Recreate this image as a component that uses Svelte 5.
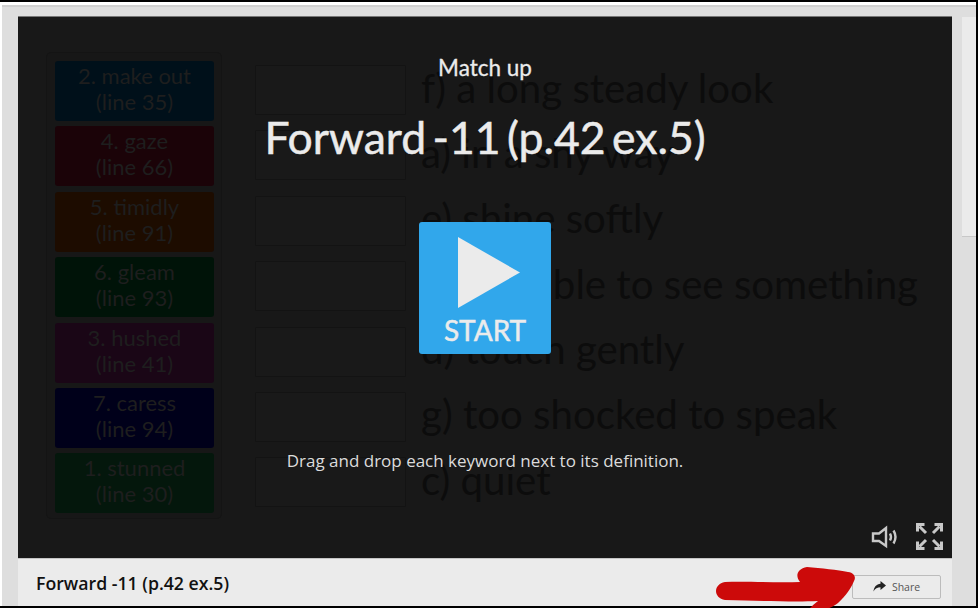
<script>
  const rows = [
    { word: '2. make out', line: '(line 35)', tone: 'blue', def: 'f) a long steady look' },
    { word: '4. gaze', line: '(line 66)', tone: 'red', def: 'a) in a shy way' },
    { word: '5. timidly', line: '(line 91)', tone: 'orange', def: 'e) shine softly' },
    { word: '6. gleam', line: '(line 93)', tone: 'green', def: 'b) not able to see something' },
    { word: '3. hushed', line: '(line 41)', tone: 'purple', def: 'd) touch gently' },
    { word: '7. caress', line: '(line 94)', tone: 'navy', def: 'g) too shocked to speak' },
    { word: '1. stunned', line: '(line 30)', tone: 'forest', def: 'c) quiet' }
  ];
</script>

<div class="frame">
  <div class="sheet">
    <main class="player">
      <section class="stage">
        <div class="game">
          <div class="tray">
            {#each rows as r}
              <div class="tile {r.tone}"><span>{r.word}</span><span>{r.line}</span></div>
            {/each}
          </div>
          <div class="answers">
            {#each rows as r}
              <div class="answer"><div class="slot"></div><div class="def">{r.def}</div></div>
            {/each}
          </div>
        </div>

        <div class="intro">
          <div class="type">Match up</div>
          <h1>Forward -11 (p.42 ex.5)</h1>
          <button class="start">
            <svg width="62" height="72" viewBox="0 0 62 72"><path d="M0 0L62 35.500L0 71Z" fill="#ebebeb" /></svg>
            <span>START</span>
          </button>
          <p>Drag and drop each keyword next to its definition.</p>
        </div>

        <div class="controls">
          <svg width="28" height="24" viewBox="0 0 28 24" fill="none" stroke="#c8c8c8" stroke-width="2.400">
            <path d="M2 8.500H8L15 3V21L8 16H2Z" />
            <path d="M19 8.500Q21 12 19 15.500M22.500 5.500Q26.500 12 22.500 18.500" />
          </svg>
          <svg width="27" height="27" viewBox="0 0 27 27" fill="none" stroke="#c8c8c8" stroke-width="3">
            <path d="M1.500 8.500V1.500H8.500M3.500 3.500L10 10" />
            <path d="M25.500 8.500V1.500H18.500M23.500 3.500L17 10" />
            <path d="M1.500 18.500V25.500H8.500M3.500 23.500L10 17" />
            <path d="M25.500 18.500V25.500H18.500M23.500 23.500L17 17" />
          </svg>
        </div>
      </section>

      <footer class="bar">
        <div class="name">Forward -11 (p.42 ex.5)</div>
        <button class="share">
          <svg width="13" height="11" viewBox="0 0 13 11"><path d="M7.500 0L13 4.500L7.500 9V6.300C4.500 6.300 2 7.300 0.500 10.500C0.800 6 3.500 3 7.500 2.700Z" fill="#222" /></svg>
          <span>Share</span>
        </button>
      </footer>
    </main>
    <aside class="rail"></aside>
  </div>

  <svg class="scribble" width="150" height="44" viewBox="0 0 150 44">
    <path d="M9 16C30 15 60 17 84 16C79 10 81 3 91 1C105 2 122 4 132 6C139 7 140 12 138 15C135 22 130 30 122 37C118 40 114 42 108 44H92C95 41 98 38 102 35C80 36 50 35 9 34C-3 32 -3 18 9 16Z" fill="#cc0a0a" />
  </svg>
</div>

<style>
  :global(body) {
    margin: 0;
    background: #000;
  }
  .frame {
    position: relative;
    width: 976px;
    height: 606px;
    padding-top: 2px;
    overflow: hidden;
    box-sizing: content-box;
  }
  .sheet {
    display: flex;
    align-items: flex-start;
    height: 604px;
    box-sizing: border-box;
    padding: 14px 0 0 16px;
    background: linear-gradient(#fff 0 3px, #d0d0d0 3px 5px, #dedede 5px);
    border-left: 2px solid #fff;
  }
  .player {
    width: 934px;
    height: 590px;
    flex: none;
    display: flex;
    flex-direction: column;
  }
  .stage {
    position: relative;
    height: 542px;
    flex: none;
    background: #181818;
    border-top: 1px solid #777;
    box-sizing: border-box;
    overflow: hidden;
  }
  .game {
    display: flex;
    padding: 35px 0 0 28px;
  }
  .tray {
    width: 176px;
    height: 467px;
    box-sizing: border-box;
    padding: 8px 7px 0 8px;
    border: 1px solid #141414;
    border-radius: 5px;
    background: #171717;
    display: flex;
    flex-direction: column;
    gap: 5.400px;
  }
  .tile {
    height: 60px;
    box-sizing: border-box;
    padding-bottom: 4px;
    flex: none;
    border-radius: 3px;
    display: flex;
    flex-direction: column;
    align-items: center;
    justify-content: center;
    font: 22px/26px Lato, sans-serif;
    color: #1e1e1e;
  }
  .blue { background: #00101a; }
  .red { background: #1b0308; }
  .orange { background: #1d0c00; }
  .green { background: #001308; }
  .purple { background: #1a0616; }
  .navy { background: #00001a; }
  .forest { background: #04170c; }
  .answers {
    margin: 13px 0 0 33px;
    display: flex;
    flex-direction: column;
    gap: 15.400px;
  }
  .answer {
    display: flex;
    align-items: center;
    height: 50px;
    gap: 15px;
  }
  .slot {
    width: 151px;
    height: 50px;
    box-sizing: border-box;
    border: 1px solid #131313;
    background: #191919;
    border-radius: 1px;
    flex: none;
  }
  .def {
    font: 40.200px/50px Lato, sans-serif;
    color: #0c0c0c;
    white-space: nowrap;
    margin-top: -5px;
  }
  .intro {
    position: absolute;
    inset: 0;
    display: flex;
    flex-direction: column;
    align-items: center;
    color: #ebebeb;
    font-family: Lato, sans-serif;
  }
  .type {
    margin-top: 37px;
    font-size: 22.500px;
    line-height: 28px;
    -webkit-text-stroke: 0.3px #ebebeb;
  }
  h1 {
    margin: 23px 0 0;
    font-size: 44.500px;
    line-height: 64px;
    font-weight: 400;
    white-space: nowrap;
    word-spacing: -5px;
    -webkit-text-stroke: 0.5px #ebebeb;
  }
  .start {
    margin-top: 53px;
    width: 132px;
    height: 132px;
    padding: 15px 0 0;
    border: 0;
    border-radius: 3px;
    background: #31a7eb;
    color: #ebebeb;
    display: flex;
    flex-direction: column;
    align-items: center;
    font: 28px/34px Lato, sans-serif;
    -webkit-text-stroke: 0.5px #ebebeb;
  }
  .start svg {
    margin-left: 8px;
  }
  .start span {
    margin-top: 4px;
  }
  p {
    margin: 96px 0 0;
    font: 17px/22px "Open Sans", sans-serif;
    color: #dcdcdc;
  }
  .controls {
    position: absolute;
    right: 9px;
    bottom: 8px;
    display: flex;
    align-items: center;
    gap: 17px;
  }
  .bar {
    flex: 1;
    background: #ebebeb;
    border-top: 1px solid #c4c4c4;
    display: flex;
    align-items: center;
    justify-content: space-between;
    padding: 0 11px 0 18px;
  }
  .name {
    font: 600 17.700px/24px "Open Sans", sans-serif;
    color: #111;
  }
  .share {
    width: 89px;
    height: 24px;
    margin-top: 8px;
    display: flex;
    align-items: center;
    justify-content: center;
    gap: 6px;
    border: 1px solid #bcbcbc;
    border-radius: 2px;
    background: #ebebeb;
    font: 10.500px "Open Sans", sans-serif;
    color: #555;
    padding: 0;
  }
  .rail {
    width: 15px;
    height: 220px;
    flex: none;
    margin: 1px 0 0 10px;
    background: #ebebeb;
    border-bottom: 1px solid #c8c8c8;
    box-sizing: border-box;
  }
  .scribble {
    position: absolute;
    left: 716px;
    top: 566px;
  }
</style>
